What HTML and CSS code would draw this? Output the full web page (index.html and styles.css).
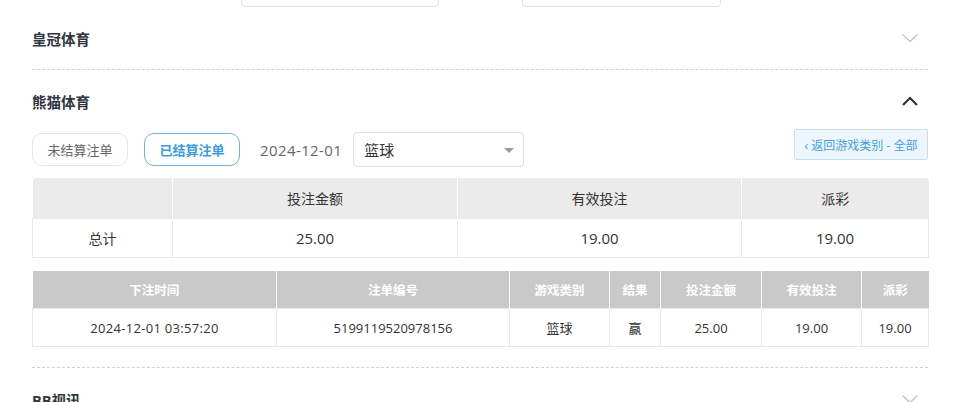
FILE: index.html
```html
<!DOCTYPE html>
<html lang="zh">
<head>
<meta charset="utf-8">
<link rel="stylesheet" href="styles.css">
</head>
<body>
<div class="page">
  <div class="filters">
    <div class="field f1"></div>
    <div class="field f2"></div>
  </div>

  <div class="section collapsed">
    <div class="sec-head">
      <span class="sec-title">皇冠体育</span>
      <svg class="chev down" width="18" height="12" viewBox="0 0 18 12"><path d="M1.5 2.5 L9 9.5 L16.5 2.5" fill="none" stroke="#c9c9c9" stroke-width="1.6"/></svg>
    </div>
  </div>

  <div class="section open">
    <div class="sec-head">
      <span class="sec-title">熊猫体育</span>
      <svg class="chev up" width="18" height="12" viewBox="0 0 18 12"><path d="M2 10 L9 3 L16 10" fill="none" stroke="#2c3544" stroke-width="2.2"/></svg>
    </div>
    <div class="toolbar">
      <button class="tab">未结算注单</button>
      <button class="tab active">已结算注单</button>
      <span class="date">2024-12-01</span>
      <div class="select"><span>篮球</span><i class="caret"></i></div>
      <button class="back">‹ 返回游戏类别 - 全部</button>
    </div>

    <table class="summary">
      <colgroup><col style="width:140px"><col style="width:285px"><col style="width:284px"><col style="width:187px"></colgroup>
      <thead><tr><th></th><th>投注金额</th><th>有效投注</th><th>派彩</th></tr></thead>
      <tbody><tr><td>总计</td><td>25.00</td><td>19.00</td><td>19.00</td></tr></tbody>
    </table>

    <table class="detail">
      <colgroup><col style="width:244px"><col style="width:233px"><col style="width:100px"><col style="width:51px"><col style="width:101px"><col style="width:100px"><col style="width:67px"></colgroup>
      <thead><tr><th>下注时间</th><th>注单编号</th><th>游戏类别</th><th>结果</th><th>投注金额</th><th>有效投注</th><th>派彩</th></tr></thead>
      <tbody><tr><td class="dt">2024-12-01 03:57:20</td><td>5199119520978156</td><td>篮球</td><td>赢</td><td>25.00</td><td>19.00</td><td>19.00</td></tr></tbody>
    </table>
  </div>

  <div class="section collapsed">
    <div class="sec-head">
      <span class="sec-title">BB视讯</span>
      <svg class="chev down" width="18" height="12" viewBox="0 0 18 12"><path d="M1.5 2.5 L9 9.5 L16.5 2.5" fill="none" stroke="#c9c9c9" stroke-width="1.6"/></svg>
    </div>
  </div>
</div>
</body>
</html>
```

FILE: styles.css
```css
* { box-sizing: border-box; }
html, body { margin: 0; padding: 0; background: #fff; }
body {
  font-family: "Open Sans", "Noto Sans CJK SC", sans-serif;
  color: #333;
  overflow: hidden;
  height: 402px;
}
.page {
  width: 896px;
  margin-left: 32px;
}
.filters {
  height: 7px;
  overflow: hidden;
  display: flex;
  align-items: flex-end;
}
.field {
  height: 34px;
  border: 1px solid #dcdfe6;
  border-radius: 4px;
  flex: none;
}
.f1 { width: 198px; margin-left: 209px; }
.f2 { width: 199px; margin-left: 83px; }

.section { border-bottom: 1px dashed #d0d0d0; }
.section.open { padding-bottom: 20px; }
.sec-head {
  height: 62px;
  display: flex;
  align-items: center;
  justify-content: space-between;
  padding-right: 9px;
}
.sec-title {
  font-size: 14.5px;
  font-weight: 700;
  color: #303640;
}
.chev { display: block; }

.toolbar {
  display: flex;
  align-items: center;
  height: 35px;
  margin-bottom: 11px;
}
.tab {
  font-family: inherit;
  width: 96px;
  height: 33px;
  border: 1px solid #e6e6e6;
  border-radius: 10px;
  background: #fff;
  color: #666;
  font-size: 13px;
  padding: 0;
  margin-right: 16px;
}
.tab.active {
  border-color: #6fb1e6;
  color: #3d9be3;
  font-weight: 700;
  margin-right: 20px;
}
.date {
  font-size: 15px;
  color: #666;
  letter-spacing: 0.4px;
  margin-right: 11px;
}
.select {
  width: 171px;
  height: 35px;
  border: 1px solid #dcdfe6;
  border-radius: 4px;
  display: flex;
  align-items: center;
  justify-content: space-between;
  padding: 0 9px 0 10px;
  font-size: 15px;
  color: #333;
}
.caret {
  width: 0; height: 0;
  border-left: 5px solid transparent;
  border-right: 5px solid transparent;
  border-top: 5px solid #999;
  margin-top: 2px;
}
.back {
  font-family: inherit;
  margin-left: auto;
  align-self: flex-start;
  width: 134px;
  height: 31px;
  padding: 0;
  border: 1px solid #c5def3;
  background: #eef6fd;
  color: #3f9fe6;
  font-size: 12px;
  border-radius: 2px;
  margin-top: -3px;
  white-space: nowrap;
}

table {
  border-collapse: collapse;
  table-layout: fixed;
  width: 896px;
}
.summary { margin-bottom: 13px; }
.summary th {
  background: #ebebeb;
  height: 40px;
  font-weight: 400;
  font-size: 14px;
  color: #333;
  border-left: 1px solid #fff;
}
.summary th:first-child { border-left: none; border-top-left-radius: 4px; }
.summary th:last-child { border-top-right-radius: 4px; }
.summary td {
  height: 39px;
  text-align: center;
  font-size: 15px;
  color: #333;
  border: 1px solid #e8e8e8;
}
.summary td:first-child { font-size: 14px; }

.detail th {
  background: #c9c9c9;
  color: #fff;
  height: 38px;
  font-size: 12.5px;
  font-weight: 700;
  border-left: 1px solid #fff;
}
.detail th:first-child { border-left: none; }
.detail td {
  height: 38px;
  text-align: center;
  font-size: 13px;
  color: #333;
  border: 1px solid #e8e8e8;
}
.detail td.dt { letter-spacing: 0.3px; }
```
